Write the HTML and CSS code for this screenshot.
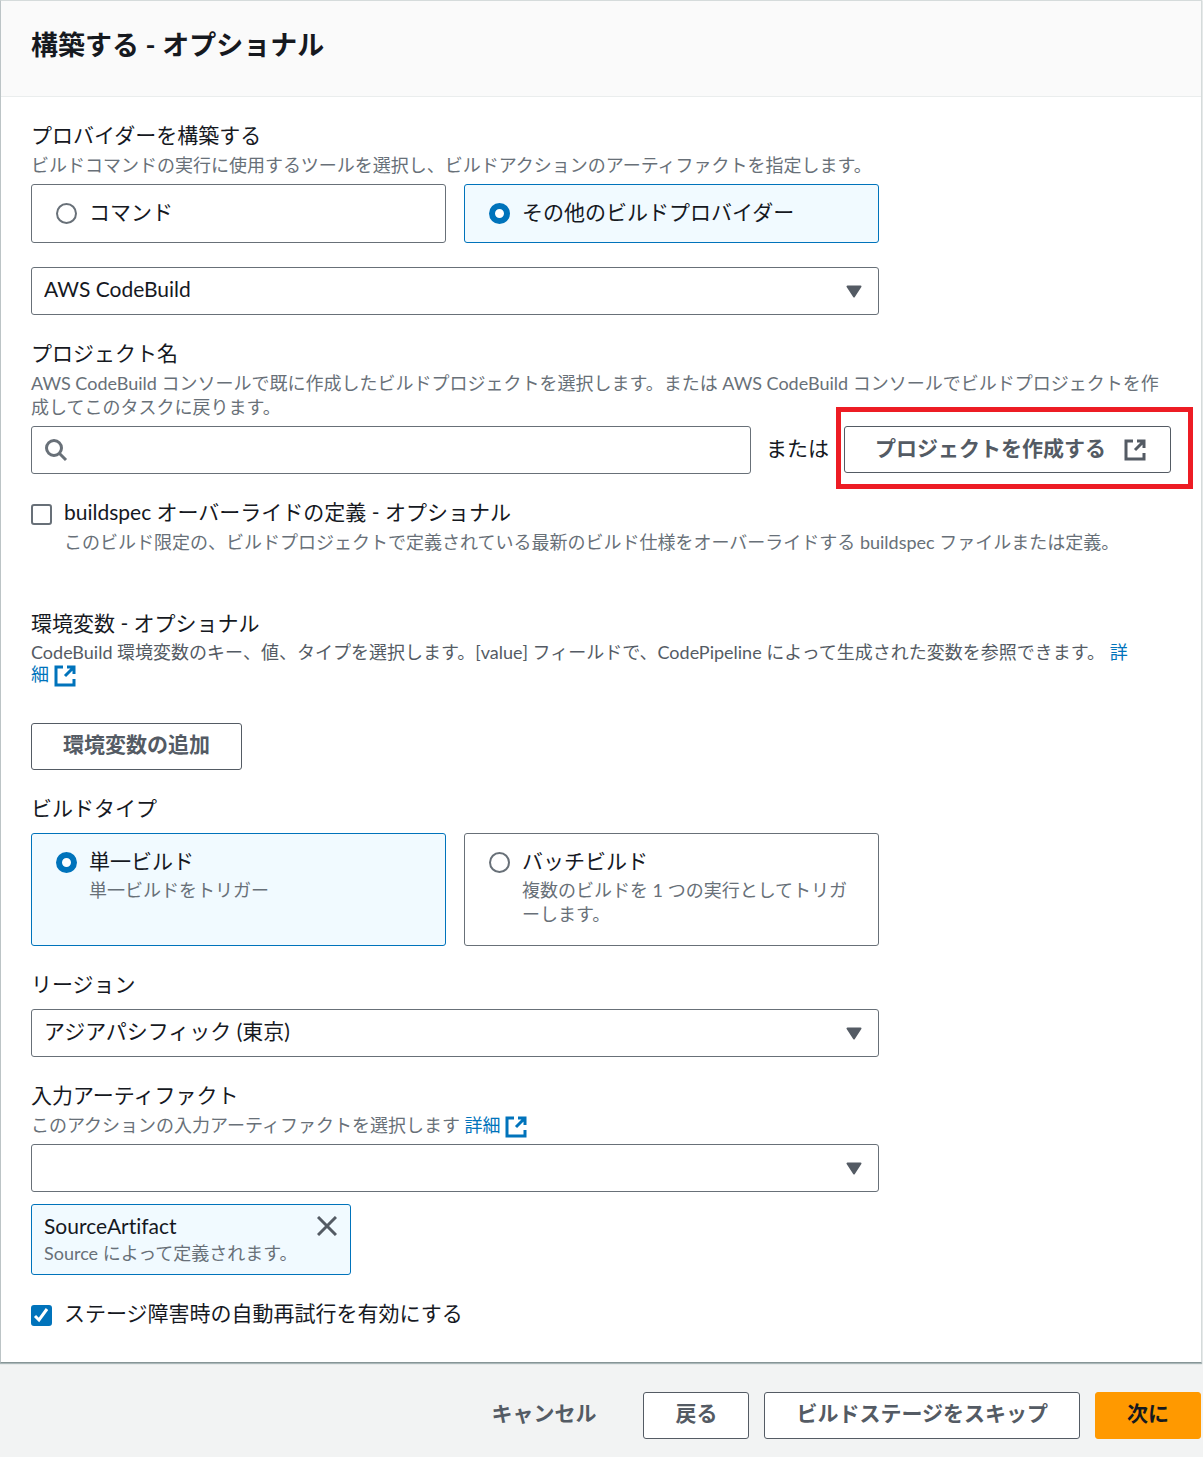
FILE: index.html
```html
<!DOCTYPE html>
<html lang="ja">
<head>
  <meta charset="UTF-8" />
  <meta name="viewport" content="width=device-width, initial-scale=1.0"/>
  <title>構築する - オプショナル</title>
  <link rel="stylesheet" href="styles.css">
</head>
<body>

  <!-- shared icons -->
  <svg class="sprite" aria-hidden="true">
    <symbol id="icon-external" viewBox="0 0 22 22">
      <path d="M9 2H2v18h18v-6M13 2h7v7M19 3l-8 8" fill="none" stroke="currentColor" stroke-width="3"/>
    </symbol>
    <symbol id="icon-caret" viewBox="0 0 16 13">
      <path d="M1.5 1.5h13L8 11.5z" fill="currentColor" stroke="currentColor" stroke-width="2" stroke-linejoin="round"/>
    </symbol>
  </svg>

  <form id="buildForm">
    <section class="panel">
      <header class="panel-header">
        <h1>構築する - オプショナル</h1>
      </header>

      <div class="panel-body">
        <fieldset class="field">
          <legend class="label">プロバイダーを構築する</legend>
          <p class="desc">ビルドコマンドの実行に使用するツールを選択し、ビルドアクションのアーティファクトを指定します。</p>
          <div class="tiles">
            <label class="tile">
              <input type="radio" name="provider" value="commands">
              <span>コマンド</span>
            </label>
            <label class="tile">
              <input type="radio" name="provider" value="other" checked>
              <span>その他のビルドプロバイダー</span>
            </label>
          </div>
        </fieldset>

        <div class="field">
          <div class="select">
            <select aria-label="プロバイダー">
              <option>AWS CodeBuild</option>
            </select>
            <svg class="caret"><use href="#icon-caret"/></svg>
          </div>
        </div>

        <div class="field">
          <label class="label" for="project-name">プロジェクト名</label>
          <p class="desc">AWS CodeBuild コンソールで既に作成したビルドプロジェクトを選択します。または AWS CodeBuild コンソールでビルドプロジェクトを作成してこのタスクに戻ります。</p>
          <div class="project-row">
            <div class="search">
              <svg class="search-icon" viewBox="0 0 24 24" fill="none" stroke="currentColor" stroke-width="3">
                <circle cx="10" cy="10" r="7.5"/>
                <path d="M15.5 15.5l6.500 6.500"/>
              </svg>
              <input type="text" id="project-name">
            </div>
            <span class="or">または</span>
            <div class="highlight">
              <button type="button" class="btn btn-external">プロジェクトを作成する <svg class="icon"><use href="#icon-external"/></svg></button>
            </div>
          </div>
        </div>

        <div class="field check">
          <input type="checkbox" id="buildspec" aria-describedby="buildspec-desc">
          <div>
            <label class="label" for="buildspec">buildspec オーバーライドの定義 - オプショナル</label>
            <p class="desc" id="buildspec-desc">このビルド限定の、ビルドプロジェクトで定義されている最新のビルド仕様をオーバーライドする buildspec ファイルまたは定義。</p>
          </div>
        </div>

        <div class="field env">
          <h2 class="label">環境変数 - オプショナル</h2>
          <p class="desc env-desc">CodeBuild 環境変数のキー、値、タイプを選択します。[value] フィールドで、CodePipeline によって生成された変数を参照できます。 <a href="#">詳<span class="nowrap">細 <svg class="icon"><use href="#icon-external"/></svg></span></a></p>
          <button type="button" class="btn">環境変数の追加</button>
        </div>

        <fieldset class="field">
          <legend class="label">ビルドタイプ</legend>
          <div class="tiles tiles-spaced">
            <label class="tile">
              <input type="radio" name="buildtype" value="single" checked>
              <span>単一ビルド<small>単一ビルドをトリガー</small></span>
            </label>
            <label class="tile">
              <input type="radio" name="buildtype" value="batch">
              <span>バッチビルド<small>複数のビルドを 1 つの実行としてトリガーします。</small></span>
            </label>
          </div>
        </fieldset>

        <div class="field">
          <label class="label" for="region">リージョン</label>
          <div class="select select-spaced">
            <select id="region">
              <option>アジアパシフィック (東京)</option>
            </select>
            <svg class="caret"><use href="#icon-caret"/></svg>
          </div>
        </div>

        <div class="field">
          <label class="label" for="artifact">入力アーティファクト</label>
          <p class="desc">このアクションの入力アーティファクトを選択します <a href="#">詳<span class="nowrap">細 <svg class="icon"><use href="#icon-external"/></svg></span></a></p>
          <div class="select">
            <select id="artifact">
              <option></option>
            </select>
            <svg class="caret"><use href="#icon-caret"/></svg>
          </div>
          <div class="token">
            <div>
              <div class="token-name">SourceArtifact</div>
              <div class="token-desc">Source によって定義されます。</div>
            </div>
            <button type="button" class="token-close" aria-label="削除">
              <svg viewBox="0 0 20 20" fill="none" stroke="currentColor" stroke-width="3">
                <path d="M1 1l18 18M19 1L1 19"/>
              </svg>
            </button>
          </div>
        </div>

        <div class="field check">
          <input type="checkbox" id="retry" checked>
          <label class="label" for="retry">ステージ障害時の自動再試行を有効にする</label>
        </div>
      </div>
    </section>

    <div class="actions">
      <button type="button" class="btn btn-link">キャンセル</button>
      <button type="button" class="btn">戻る</button>
      <button type="button" class="btn">ビルドステージをスキップ</button>
      <button type="submit" class="btn btn-primary">次に</button>
    </div>
  </form>

</body>
</html>
```

FILE: styles.css
```css
* {
  box-sizing: border-box;
}

body {
  margin: 0;
  background: #f2f3f3;
  color: #16191f;
  font-family: Lato, "Noto Sans CJK JP", sans-serif;
  font-size: 21px;
  font-variant-ligatures: none;
  line-height: 30px;
}

input, select, button {
  font: inherit;
  color: inherit;
  margin: 0;
}

h1, h2, p, fieldset, legend {
  margin: 0;
  padding: 0;
  border: none;
}

fieldset {
  min-width: 0;
}

a {
  color: #0073bb;
  text-decoration: none;
}

.nowrap {
  white-space: nowrap;
}

.sprite {
  position: absolute;
  width: 0;
  height: 0;
}

.panel {
  margin-right: 1px;
  background: #fff;
  border: 1px solid #d5dbdb;
  border-left-color: #bcc4c6;
  border-bottom-color: #879596;
  box-shadow: 0 1px 1px #aab7b8;
}

.panel-header {
  padding: 26px 30px 33px;
  background: #fafafa;
  border-bottom: 1px solid #eaeded;
}

.panel-header h1 {
  font-size: 27px;
  line-height: 36px;
}

.panel-body {
  padding: 24px 30px 33px;
}

.field + .field {
  margin-top: 24px;
}

.label {
  display: block;
  padding-bottom: 2px;
  font-size: 21px;
  font-weight: normal;
  line-height: 28px;
}

.desc {
  margin: 2px 0 7px;
  color: #687078;
  font-size: 18px;
  line-height: 24px;
}

.icon {
  width: 22px;
  height: 22px;
  vertical-align: middle;
}

.desc .icon {
  margin: -3px 0;
}

/* radio tiles */
.tiles {
  display: grid;
  grid-template-columns: 1fr 1fr;
  gap: 18px;
  max-width: 848px;
}

.tiles-spaced, .select-spaced {
  margin-top: 9px;
}

.tile {
  display: flex;
  align-items: flex-start;
  gap: 12px;
  padding: 12px 24px 15px;
  border: 1px solid #687078;
  border-radius: 3px;
}

.tile:has(input:checked) {
  background: #f1faff;
  border-color: #0073bb;
}

.tile small {
  display: block;
  margin: 2px 0 4px;
  color: #687078;
  font-size: 18px;
  line-height: 24px;
  line-break: loose;
}

input[type="radio"], input[type="checkbox"] {
  appearance: none;
  flex: none;
  width: 21px;
  height: 21px;
  margin-top: 6px;
  background: #fff;
  border: 2px solid #687078;
}

input[type="radio"] {
  border-radius: 50%;
}

input[type="radio"]:checked {
  border: 6px solid #0073bb;
}

input[type="checkbox"] {
  border-radius: 3px;
}

input[type="checkbox"]:checked {
  border-color: #0073bb;
  background: #0073bb url("data:image/svg+xml,%3Csvg xmlns='http://www.w3.org/2000/svg' viewBox='0 0 17 17'%3E%3Cpath d='M2 9l4 4 8-11' fill='none' stroke='white' stroke-width='3'/%3E%3C/svg%3E") center / 17px no-repeat;
}

/* dropdowns */
.select {
  position: relative;
  max-width: 848px;
}

.select select {
  display: block;
  appearance: none;
  width: 100%;
  height: 48px;
  padding: 0 48px 4px 12px;
  background: #fff;
  border: 1px solid #687078;
  border-radius: 3px;
}

.caret {
  position: absolute;
  right: 17px;
  top: 18px;
  width: 16px;
  height: 13px;
  color: #545b64;
  pointer-events: none;
}

.project-row {
  display: flex;
  align-items: flex-start;
  gap: 15px;
}

.search {
  display: flex;
  flex: 1;
  align-items: center;
  height: 48px;
  padding: 0 12px;
  border: 1px solid #687078;
  border-radius: 3px;
}

.search-icon {
  width: 24px;
  height: 24px;
  color: #687078;
}

.search input {
  flex: 1;
  min-width: 0;
  height: 100%;
  border: none;
  outline: none;
}

.or {
  line-height: 44px;
}

/* buttons */
.btn {
  height: 47px;
  padding: 0 31px 5px;
  background: #fff;
  border: 1px solid #545b64;
  border-radius: 3px;
  color: #545b64;
  font-weight: bold;
}

.btn-external {
  display: flex;
  align-items: center;
  gap: 18px;
  padding: 0 24px 3px 30px;
}

.btn-external .icon {
  margin-top: 3px;
}

.highlight {
  position: relative;
}

.highlight::after {
  content: "";
  position: absolute;
  inset: -19px -22px -16px -8px;
  border: 5px solid #ed1c24;
  pointer-events: none;
}

.check {
  display: flex;
  gap: 12px;
}

.env.field {
  margin-top: 48px;
}

.env-desc {
  margin-bottom: 38px;
  color: #545b64;
  line-height: 22px;
}

.token {
  display: flex;
  align-items: flex-start;
  justify-content: space-between;
  width: 320px;
  max-width: 100%;
  margin-top: 12px;
  padding: 6px 12px 8px;
  background: #f1faff;
  border: 1px solid #0073bb;
  border-radius: 3px;
}

.token-desc {
  color: #687078;
  font-size: 18px;
  line-height: 25px;
}

.token-close {
  width: 22px;
  height: 30px;
  padding: 5px 1px;
  background: none;
  border: none;
  color: #545b64;
}

.token-close svg {
  display: block;
}

.actions {
  display: flex;
  justify-content: flex-end;
  gap: 15px;
  padding: 29px 2px 18px;
}

.btn-link {
  background: none;
  border-color: transparent;
}

.btn-primary {
  background: #ff9900;
  border-color: #ff9900;
  color: #16191f;
}
```
